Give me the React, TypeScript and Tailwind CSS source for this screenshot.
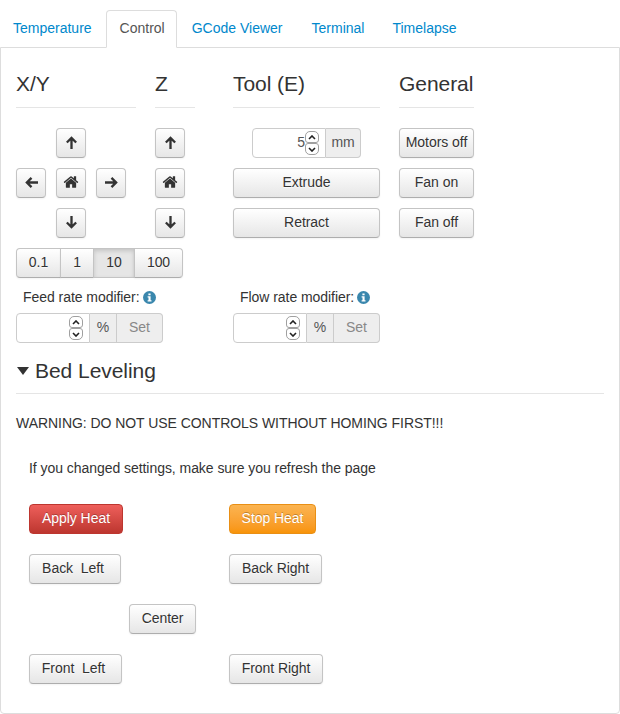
import type { ReactNode } from "react";

const btn =
  "inline-flex h-[30px] items-center justify-center rounded-[4px] border border-[#c4c4c4] border-b-[#adadad] bg-gradient-to-b from-white to-[#e6e6e6] pb-[2px] text-[14px] leading-5 text-[#333333] shadow-[inset_0_1px_0_rgba(255,255,255,0.2),0_1px_2px_rgba(0,0,0,0.05)] [text-shadow:0_1px_1px_rgba(255,255,255,0.75)]";
const legend = "mb-5 mt-4 h-[44px] border-b border-[#e5e5e5] text-[21px] leading-[40px] text-[#333333]";

function HomeIcon() {
  return (
    <svg viewBox="0 0 1792 1792" className="h-[16px] w-[16px] fill-[#333333]">
      <path d="M1472 992v480q0 26-19 45t-45 19h-384v-384h-256v384h-384q-26 0-45-19t-19-45v-480q0-1 .5-3t.5-3l575-474 575 474q1 2 1 6zm223-69l-62 74q-8 9-21 11h-3q-13 0-21-7l-692-577-692 577q-12 8-24 7-13-2-21-11l-62-74q-8-10-7-23.5t11-21.5l719-599q32-26 76-26t76 26l244 204v-195q0-14 9-23t23-9h192q14 0 23 9t9 23v408l219 182q10 8 11 21.5t-7 23.5z" />
    </svg>
  );
}

function Arrow({ dir }: { dir: "up" | "down" | "left" | "right" }) {
  const rotate = { up: "rotate-0", down: "rotate-180", left: "-rotate-90", right: "rotate-90" }[dir];
  return (
    <svg viewBox="0 0 14 14" className={`h-[13px] w-[13px] ${rotate}`} fill="none" stroke="#333333" strokeWidth="2.5">
      <path d="M7 14V2.2M2 7l5-5 5 5" />
    </svg>
  );
}

function IconBtn({ children }: { children: ReactNode }) {
  return <button className={`${btn} w-[30px]`}>{children}</button>;
}

function Spinner() {
  return (
    <span className="absolute right-[6px] top-[2px] flex w-[14px] flex-col">
      <span className="flex h-[12px] items-center justify-center rounded-t-[5px] rounded-b-[3px] border border-[#a0a0a0] bg-white">
        <svg viewBox="0 0 8 5" className="h-[5px] w-[8px]" fill="none" stroke="#222222" strokeWidth="1.6"><path d="M1 4l3-3 3 3" /></svg>
      </span>
      <span className="flex h-[12px] items-center justify-center rounded-t-[3px] rounded-b-[5px] border border-[#a0a0a0] bg-white">
        <svg viewBox="0 0 8 5" className="h-[5px] w-[8px]" fill="none" stroke="#222222" strokeWidth="1.6"><path d="M1 1l3 3 3-3" /></svg>
      </span>
    </span>
  );
}

function InfoIcon() {
  return (
    <svg viewBox="0 0 13 13" className="ml-[3px] h-[13px] w-[13px]">
      <circle cx="6.5" cy="6.5" r="6.5" fill="#3a87ad" />
      <path d="M5.4 2.4h2.2v1.9H5.4zM4.6 5.2h3v4h.9v1.4H4.6V9.2h.9V6.6h-.9z" fill="#ffffff" />
    </svg>
  );
}

function RateInput() {
  return (
    <div className="flex h-[30px] w-[147px] text-[14px] text-[#555555]">
      <div className="relative w-[74px] rounded-l-[4px] border border-[#cccccc] bg-white">
        <Spinner />
      </div>
      <span className="flex w-[27px] items-center justify-center border-y border-r border-[#cccccc] bg-[#eeeeee] pb-[2px]">%</span>
      <span className="flex flex-1 items-center justify-center rounded-r-[4px] border-y border-r border-[#cccccc] bg-[#eeeeee] pb-[2px] text-[#888888]">
        Set
      </span>
    </div>
  );
}

export default function App() {
  return (
    <div className="h-[714px] w-[620px] overflow-hidden bg-white pt-[10px] font-['Liberation_Sans',Arial,sans-serif] text-[14px] tracking-[-0.05px] text-[#333333]">
      {/* Tabs */}
      <div className="relative z-10 flex h-[38px] text-[14px] leading-5 tracking-normal text-[#0088cc]">
        <a className="mr-[1px] px-[13px] py-[8px]">Temperature</a>
        <a className="rounded-t-[4px] border border-[#dddddd] border-b-white bg-white py-[7px] pl-[13px] pr-[11px] text-[#555555]">Control</a>
        <a className="px-[15px] py-[8px]">GCode Viewer</a>
        <a className="ml-[1px] px-[13px] py-[8px]">Terminal</a>
        <a className="ml-[2px] px-[13px] py-[8px]">Timelapse</a>
      </div>

      {/* Panel */}
      <div className="mt-[-1px] h-[667px] rounded-b-[4px] border border-[#dddddd] px-[15px]">
        <div className="flex">
          <div className="w-[120px]">
            <div className={legend}>X/Y</div>
            <div className="flex flex-col gap-[10px]">
              <div className="flex pl-[40px]"><IconBtn><Arrow dir="up" /></IconBtn></div>
              <div className="flex gap-[10px]">
                <IconBtn><Arrow dir="left" /></IconBtn>
                <IconBtn><HomeIcon /></IconBtn>
                <IconBtn><Arrow dir="right" /></IconBtn>
              </div>
              <div className="flex pl-[40px]"><IconBtn><Arrow dir="down" /></IconBtn></div>
            </div>
          </div>
          <div className="ml-[19px] w-[40px]">
            <div className={legend}>Z</div>
            <div className="flex flex-col gap-[10px]">
              <IconBtn><Arrow dir="up" /></IconBtn>
              <IconBtn><HomeIcon /></IconBtn>
              <IconBtn><Arrow dir="down" /></IconBtn>
            </div>
          </div>
          <div className="ml-[38px] w-[147px]">
            <div className={legend}>Tool (E)</div>
            <div className="flex flex-col gap-[10px]">
              <div className="ml-[19px] flex h-[30px] w-[109px]">
                <div className="relative flex-1 rounded-l-[4px] border border-[#cccccc] bg-white pr-[20px] text-right leading-[26px] text-[#555555]">
                  5
                  <Spinner />
                </div>
                <span className="flex w-[35px] items-center justify-center rounded-r-[4px] border-y border-r border-[#cccccc] bg-[#eeeeee] pb-[2px] text-[#555555]">mm</span>
              </div>
              <button className={`${btn} w-full`}>Extrude</button>
              <button className={`${btn} w-full`}>Retract</button>
            </div>
          </div>
          <div className="ml-[19px] w-[75px]">
            <div className={legend}>General</div>
            <div className="flex flex-col gap-[10px]">
              <button className={`${btn} w-full`}>Motors off</button>
              <button className={`${btn} w-full`}>Fan on</button>
              <button className={`${btn} w-full`}>Fan off</button>
            </div>
          </div>
        </div>

        {/* Step size */}
        <div className="mt-[10px] flex w-[167px]">
          <button className={`${btn} w-[45px] rounded-r-none`}>0.1</button>
          <button className={`${btn} ml-[-1px] w-[34px] rounded-none`}>1</button>
          <button className="ml-[-1px] inline-flex h-[30px] w-[42px] items-center justify-center border border-[#c4c4c4] bg-[#e6e6e6] pb-[2px] text-[14px] text-[#333333] shadow-[inset_0_2px_4px_rgba(0,0,0,0.15)]">10</button>
          <button className={`${btn} ml-[-1px] w-[49px] rounded-l-none`}>100</button>
        </div>

        {/* Rate modifiers */}
        <div className="mt-[9px] flex">
          <div className="w-[217px]">
            <div className="flex h-5 items-center pl-[7px]">Feed rate modifier:<InfoIcon /></div>
            <div className="mt-[6px]"><RateInput /></div>
          </div>
          <div className="w-[147px]">
            <div className="flex h-5 items-center pl-[7px]">Flow rate modifier:<InfoIcon /></div>
            <div className="mt-[6px]"><RateInput /></div>
          </div>
        </div>

        {/* Bed Leveling */}
        <div className="mt-[13px] flex h-[38px] items-center border-b border-[#e5e5e5] pb-[7px] text-[21px] leading-[30px]">
          <span className="ml-[0.5px] mr-[6.5px] h-0 w-0 border-x-[6.5px] border-t-[8px] border-x-transparent border-t-[#333333]" />
          Bed Leveling
        </div>
        <p className="mt-[19px] leading-5">WARNING: DO NOT USE CONTROLS WITHOUT HOMING FIRST!!!</p>
        <p className="mt-[25px] pl-[13px] leading-5">If you changed settings, make sure you refresh the page</p>

        <div className="mt-[26px] flex flex-col gap-5 pl-[13px]">
          <div className="flex">
            <div className="w-[200px]">
              <button className="inline-flex h-[30px] w-[94px] items-center justify-center rounded-[4px] border border-[#bd362f] bg-gradient-to-b from-[#ee5f5b] to-[#bd362f] pb-[2px] text-white [text-shadow:0_-1px_0_rgba(0,0,0,0.25)]">Apply Heat</button>
            </div>
            <button className="inline-flex h-[30px] w-[87px] items-center justify-center rounded-[4px] border border-[#e98f15] bg-gradient-to-b from-[#fbb450] to-[#f89406] pb-[2px] text-white [text-shadow:0_-1px_0_rgba(0,0,0,0.25)]">Stop Heat</button>
          </div>
          <div className="flex">
            <div className="w-[200px]"><button className={`${btn} w-[92px] whitespace-pre pr-[4px]`}>Back  Left</button></div>
            <button className={`${btn} w-[93px]`}>Back Right</button>
          </div>
          <div className="flex pl-[100px]">
            <button className={`${btn} w-[67px]`}>Center</button>
          </div>
          <div className="flex">
            <div className="w-[200px]"><button className={`${btn} w-[93px] whitespace-pre pr-[4px]`}>Front  Left</button></div>
            <button className={`${btn} w-[94px]`}>Front Right</button>
          </div>
        </div>
      </div>
    </div>
  );
}
